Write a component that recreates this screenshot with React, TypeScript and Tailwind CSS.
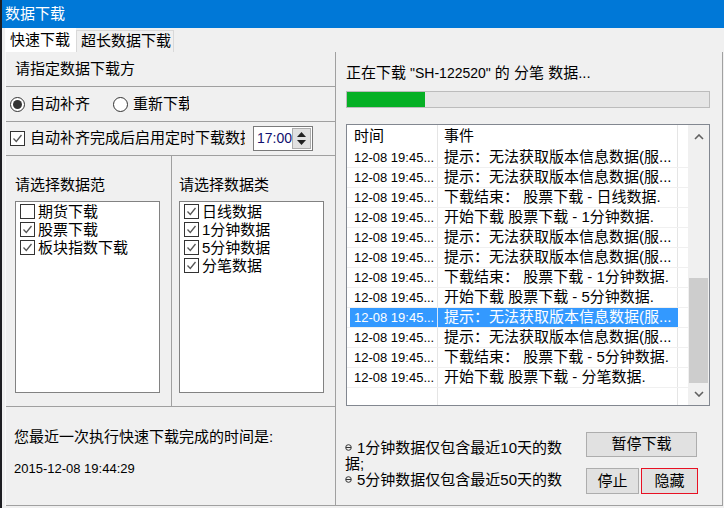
import React from 'react';

type LogRow = { time: string; text: string; selected?: boolean };

const HINT = '提示：无法获取版本信息数据(服...';

const logs: LogRow[] = [
  { time: '12-08 19:45...', text: HINT },
  { time: '12-08 19:45...', text: HINT },
  { time: '12-08 19:45...', text: '下载结束： 股票下载 - 日线数据.' },
  { time: '12-08 19:45...', text: '开始下载 股票下载 - 1分钟数据.' },
  { time: '12-08 19:45...', text: HINT },
  { time: '12-08 19:45...', text: HINT },
  { time: '12-08 19:45...', text: '下载结束： 股票下载 - 1分钟数据.' },
  { time: '12-08 19:45...', text: '开始下载 股票下载 - 5分钟数据.' },
  { time: '12-08 19:45...', text: HINT, selected: true },
  { time: '12-08 19:45...', text: HINT },
  { time: '12-08 19:45...', text: '下载结束： 股票下载 - 5分钟数据.' },
  { time: '12-08 19:45...', text: '开始下载 股票下载 - 分笔数据.' },
];

const ranges = [
  { label: '期货下载', on: false },
  { label: '股票下载', on: true },
  { label: '板块指数下载', on: true },
];

const kinds = [
  { label: '日线数据', on: true },
  { label: '1分钟数据', on: true },
  { label: '5分钟数据', on: true },
  { label: '分笔数据', on: true },
];

const CheckBox = ({ on }: { on: boolean }) => (
  <span className="w-[15px] h-[15px] shrink-0 border border-[#333] bg-white flex items-center justify-center">
    {on && (
      <svg width="11" height="11" viewBox="0 0 11 11">
        <path d="M1.5 5.5l2.8 3 5.2-6.5" fill="none" stroke="#555" strokeWidth="1.3" />
      </svg>
    )}
  </span>
);

const Radio = ({ on }: { on: boolean }) => (
  <span className="w-[15px] h-[15px] shrink-0 rounded-full border border-[#333] bg-white flex items-center justify-center">
    {on && <span className="w-[9px] h-[9px] rounded-full bg-[#333]" />}
  </span>
);

const Chevron = ({ down }: { down?: boolean }) => (
  <svg width="10" height="6" viewBox="0 0 10 6">
    <path d={down ? 'M1 1l4 4 4-4' : 'M1 5l4-4 4 4'} fill="none" stroke="#606060" strokeWidth="1.6" />
  </svg>
);

const Bullet = () => (
  <svg width="7" height="7" viewBox="0 0 7 7" className="shrink-0">
    <circle cx="3.5" cy="3.5" r="2.8" fill="none" stroke="#333" strokeWidth="1" />
    <path d="M1 3.5h5" stroke="#333" strokeWidth="1" />
  </svg>
);

const CheckList = ({ items }: { items: { label: string; on: boolean }[] }) => (
  <div className="w-[145px] h-[192px] mt-[6px] border border-[#828282] bg-white pl-[4px]">
    {items.map((it) => (
      <div key={it.label} className="h-[18px] flex items-center gap-[3px] text-[15px] leading-none">
        <CheckBox on={it.on} />
        <span>{it.label}</span>
      </div>
    ))}
  </div>
);

export default function App() {
  return (
    <div className="w-[724px] h-[508px] flex bg-[#f0f0f0] text-black overflow-hidden font-['Liberation_Sans','Noto_Sans_CJK_SC',sans-serif]">
      <div className="w-[2px] bg-[#1e1e22]" />
      <div className="flex-1 flex flex-col">
        {/* title bar */}
        <div className="h-[28px] bg-[#0078d7] text-white text-[15px] pl-[3px] flex items-center">数据下载</div>

        {/* tabs */}
        <div className="h-[24px] pl-[3px] flex items-end text-[15px]">
          <div className="w-[71px] h-[24px] bg-white pl-[5px] flex items-center">快速下载</div>
          <div className="w-[98px] h-[22px] border border-b-0 border-[#d9d9d9] pl-[4px] flex items-center">超长数据下载</div>
        </div>

        <div className="flex h-[454px] pl-[3px]">
          {/* left settings panel */}
          <div className="w-[331px] flex flex-col border-l border-r border-l-[#fafafa] border-r-[#a0a0a0] text-[15px]">
            <div className="h-[35px] border-b border-[#a0a0a0] pl-[9px] flex items-center">请指定数据下载方</div>

            <div className="h-[35px] border-b border-[#a0a0a0] pl-[4px] flex items-center">
              <Radio on />
              <span className="ml-[5px] w-[83px]">自动补齐</span>
              <Radio on={false} />
              <span className="ml-[5px] w-[56px] overflow-hidden whitespace-nowrap">重新下载</span>
            </div>

            <div className="h-[34px] border-b border-[#a0a0a0] pl-[4px] flex items-center">
              <CheckBox on />
              <span className="ml-[5px] w-[215px] overflow-hidden whitespace-nowrap">自动补齐完成后启用定时下载数据</span>
              <div className="ml-[8px] w-[60px] h-[25px] border border-[#7a7a7a] bg-white flex items-center">
                <span className="flex-1 pl-[3px] text-[14px] text-[#10106e]">17:00</span>
                <div className="w-[19px] h-[21px] mr-[1px] border border-[#adadad] bg-[#e1e1e1] flex flex-col items-center justify-center gap-[3px]">
                  <svg width="9" height="5" viewBox="0 0 9 5"><path d="M0 5L4.5 0 9 5z" fill="#222" /></svg>
                  <svg width="9" height="5" viewBox="0 0 9 5"><path d="M0 0h9L4.5 5z" fill="#222" /></svg>
                </div>
              </div>
            </div>

            <div className="h-[251px] border-b border-[#a0a0a0] flex">
              <div className="w-[166px] border-r border-[#a0a0a0] pl-[9px] pt-[19px]">
                <div className="h-[20px] flex items-center">请选择数据范</div>
                <CheckList items={ranges} />
              </div>
              <div className="flex-1 pl-[7px] pt-[19px]">
                <div className="h-[20px] flex items-center">请选择数据类</div>
                <CheckList items={kinds} />
              </div>
            </div>

            <div className="flex-1 border-b border-[#a0a0a0] pl-[8px] pt-[20px]">
              <div className="h-[20px] flex items-center">您最近一次执行快速下载完成的时间是:</div>
              <div className="h-[20px] mt-[12px] flex items-center text-[13px]">2015-12-08 19:44:29</div>
            </div>
          </div>

          {/* right progress panel */}
          <div className="w-[387px] flex flex-col border-r border-b border-[#a0a0a0] pl-[10px] pt-[11px] text-[15px]">
            <div className="h-[20px] flex items-center whitespace-nowrap">
              正在下载 <span className="text-[14px] mx-[4px]">"SH-122520"</span> 的 分笔 数据...
            </div>

            <div className="w-[364px] h-[17px] mt-[8px] border border-[#bcbcbc] bg-[#e6e6e6]">
              <div className="w-[78px] h-full bg-[#06b025]" />
            </div>

            <div className="w-[364px] h-[282px] mt-[16px] border border-[#828790] bg-white flex">
              <div className="w-[341px] flex flex-col">
                <div className="h-[23px] flex shrink-0">
                  <div className="w-[3px]" />
                  <div className="w-[88px] border-r border-[#e5e5e5] pl-[4px] flex items-center">时间</div>
                  <div className="w-[240px] border-r border-[#e5e5e5] pl-[6px] flex items-center">事件</div>
                </div>
                {logs.map((r, i) => (
                  <div key={i} className="h-[20px] flex shrink-0 border-b border-[#f0f0f0]">
                    <div className="w-[3px]" />
                    <div className={`w-[88px] border-r pl-[4px] flex items-center text-[13px] whitespace-nowrap ${r.selected ? 'bg-[#3399ff] text-white border-[#d8e8fb]' : 'border-[#e5e5e5]'}`}>
                      {r.time}
                    </div>
                    <div className={`w-[240px] border-r pl-[6px] flex items-center whitespace-nowrap overflow-hidden ${r.selected ? 'bg-[#3399ff] text-white border-[#3399ff]' : 'border-[#e5e5e5]'}`}>
                      {r.text}
                    </div>
                  </div>
                ))}
                <div className="flex-1 flex">
                  <div className="w-[3px]" />
                  <div className="w-[88px] border-r border-[#e5e5e5]" />
                  <div className="w-[240px] border-r border-[#e5e5e5]" />
                </div>
              </div>

              {/* vertical scrollbar */}
              <div className="flex-1 bg-[#f0f0f0] flex flex-col items-center">
                <div className="h-[24px] flex items-center justify-center">
                  <Chevron />
                </div>
                <div className="flex-1 w-full px-[1px]">
                  <div className="w-full h-[105px] mt-[129px] bg-[#cdcdcd]" />
                </div>
                <div className="h-[22px] flex items-center justify-center">
                  <Chevron down />
                </div>
              </div>
            </div>

            <div className="flex flex-1">
              <div className="w-[240px] mt-[33px] text-[15px] leading-none">
                <div className="h-[16px] flex items-center gap-[5px] -ml-[1px] whitespace-nowrap">
                  <Bullet />
                  <span>1分钟数据仅包含最近10天的数</span>
                </div>
                <div className="h-[16px] flex items-center -ml-[1px]">据;</div>
                <div className="h-[17px] flex items-center gap-[5px] -ml-[1px] whitespace-nowrap">
                  <Bullet />
                  <span>5分钟数据仅包含最近50天的数</span>
                </div>
              </div>
              <div className="mt-[26px] flex flex-col gap-[11px]">
                <button className="w-[111px] h-[25px] border border-[#adadad] bg-[#e1e1e1] text-[15px] flex items-center justify-center">
                  暂停下载
                </button>
                <div className="flex gap-[2px]">
                  <button className="w-[53px] h-[26px] border border-[#adadad] bg-[#e1e1e1] text-[15px] flex items-center justify-center">
                    停止
                  </button>
                  <button className="w-[57px] h-[26px] border border-[#e81123] bg-[#e1e1e1] text-[15px] flex items-center justify-center">
                    隐藏
                  </button>
                </div>
              </div>
            </div>
          </div>
        </div>
      </div>
    </div>
  );
}
